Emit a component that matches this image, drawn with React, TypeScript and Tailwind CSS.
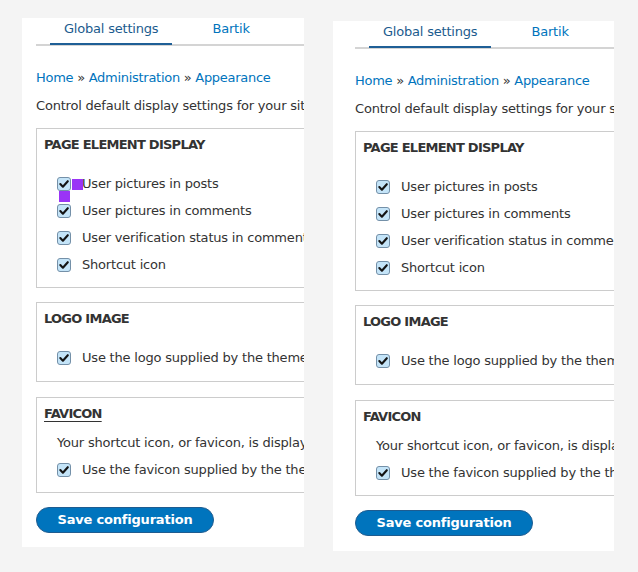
import React from "react";

function Check() {
  return (
    <svg width="14" height="14" viewBox="0 0 14 14" className="shrink-0">
      <rect x="0.5" y="0.5" width="13" height="13" rx="2.5" fill="#c4e4f8" stroke="#7490a8" />
      <path d="M3.3 7.1 L5.9 9.7 L10.8 4.2" fill="none" stroke="#141414" strokeWidth="2.1" strokeLinecap="round" strokeLinejoin="round" />
    </svg>
  );
}

function Row({ label }: { label: string }) {
  return (
    <div className="h-[27px] flex items-center pl-[20px] gap-[11px] whitespace-nowrap text-[#333]">
      <Check />
      <span>{label}</span>
    </div>
  );
}

function Panel({ pad, marks }: { pad: string; marks: boolean }) {
  return (
    <div className={"relative overflow-hidden bg-white " + (marks ? "mt-[18px] w-[282px] h-[529px]" : "ml-[29px] mt-[21px] w-[281px] h-[530px]")}>
      <div className={"w-[640px] " + pad}>
        <div className="h-[28px] border-b-2 border-[#d4d4d4] flex pl-[14px] gap-[26px] whitespace-nowrap">
          <div className="relative px-[14px] pt-[2px] leading-[18px] text-[#1b5b8e]">
            Global settings
            <span className="absolute left-0 right-0 bottom-[-1px] h-[2px] bg-[#1f5f96]" />
          </div>
          <div className="px-[14px] pt-[2px] leading-[18px] text-[#0074bd]">Bartik</div>
          <div className="px-[14px] pt-[2px] leading-[18px] text-[#0074bd]">Seven</div>
        </div>
        <div className="mt-[23px] leading-[18px] whitespace-nowrap text-[#333] tracking-[-0.28px]">
          <span className="text-[#0074bd]">Home</span> » <span className="text-[#0074bd]">Administration</span> »{" "}
          <span className="text-[#0074bd]">Appearance</span>
        </div>
        <div className="mt-[10px] leading-[18px] whitespace-nowrap text-[#333]">
          Control default display settings for your site, across all themes. Use theme-specific settings to override these defaults.
        </div>
        <div className="mt-[13px] border border-[#cccccc] pb-[9px]">
          <div className="h-[32px] flex items-center pl-[7px] font-bold text-[#333] tracking-[-0.75px]">PAGE ELEMENT DISPLAY</div>
          <div className="mt-[9px]">
            <Row label="User pictures in posts" />
            <Row label="User pictures in comments" />
            <Row label="User verification status in comments" />
            <Row label="Shortcut icon" />
          </div>
        </div>
        <div className="mt-[14px] border border-[#cccccc] pb-[10px]">
          <div className="h-[32px] flex items-center pl-[7px] font-bold text-[#333] tracking-[-0.75px]">LOGO IMAGE</div>
          <div className="mt-[9px]">
            <Row label="Use the logo supplied by the theme" />
          </div>
        </div>
        <div className="mt-[15px] border border-[#cccccc] pb-[9px]">
          <div className="h-[32px] flex items-center pl-[7px] font-bold text-[#333] tracking-[-0.75px]">
            <span className={marks ? "underline underline-offset-[3px]" : ""}>FAVICON</span>
          </div>
          <div className="mt-[4px] pl-[20px] leading-[18px] whitespace-nowrap text-[#333]">
            Your shortcut icon, or favicon, is displayed in the address bar and bookmarks of most browsers.
          </div>
          <div className="mt-[4px]">
            <Row label="Use the favicon supplied by the theme" />
          </div>
        </div>
        <div className="mt-[14px] w-[178px] h-[26px] rounded-full bg-[#0074bd] border border-[#1e5c90] flex items-center justify-center text-white font-bold whitespace-nowrap">
          Save configuration
        </div>
      </div>
      {marks && (
        <>
          <div className="absolute left-[50px] top-[161px] w-[11px] h-[11px] bg-[#9a34f6]" />
          <div className="absolute left-[37px] top-[173px] w-[11px] h-[11px] bg-[#9a34f6]" />
        </>
      )}
    </div>
  );
}

export default function App() {
  return (
    <div className="w-[638px] h-[572px] bg-[#f4f4f4] flex items-start pl-[22px] overflow-hidden font-['DejaVu_Sans',sans-serif] text-[13px] tracking-[-0.2px]">
      <Panel pad="pl-[14px]" marks={true} />
      <Panel pad="pl-[22px]" marks={false} />
    </div>
  );
}
